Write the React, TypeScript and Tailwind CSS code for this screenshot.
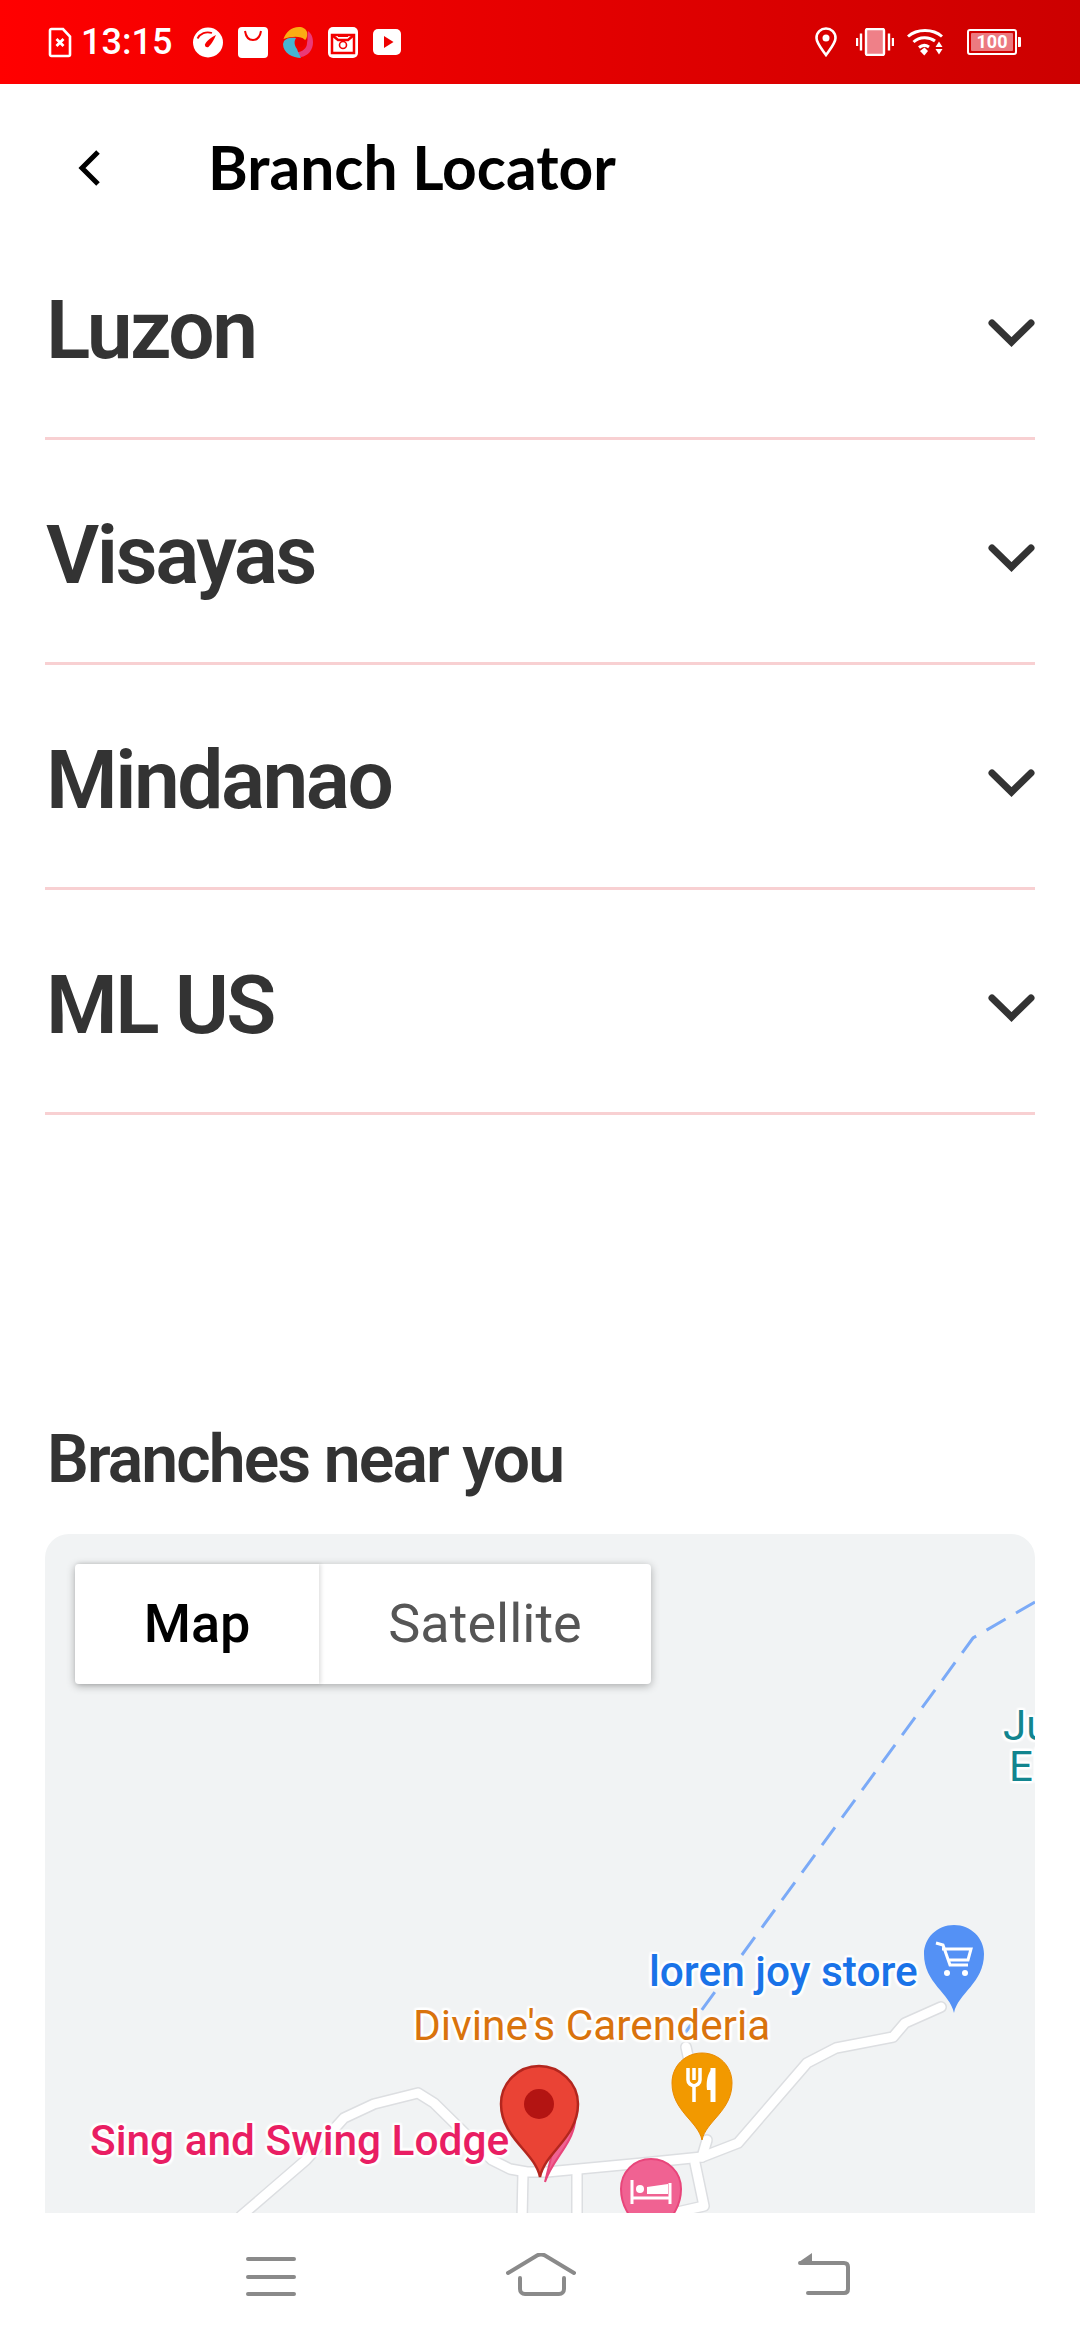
import React from 'react';

const regions = ['Luzon', 'Visayas', 'Mindanao', 'ML US'];

const FileIcon = () => (
  <svg width="24" height="31" viewBox="0 0 24 31" fill="none">
    <path d="M2 3.5C2 2.7 2.7 2 3.500 2H15L22 9.500V27.500C22 28.300 21.300 29 20.500 29H3.500C2.700 29 2 28.300 2 27.500Z" stroke="white" strokeWidth="2.600" />
    <path d="M8.500 12L15.500 19M15.500 12L8.500 19" stroke="white" strokeWidth="2.800" />
  </svg>
);

const GaugeIcon = () => (
  <svg width="30" height="31" viewBox="0 0 30 31">
    <circle cx="15" cy="15.500" r="15" fill="white" />
    <path d="M4.500 11.500C7 6.500 13 4 19 6" fill="none" stroke="#f70000" strokeWidth="1.800" />
    <path d="M12 17.500C13 14.500 18 10.500 23 8C21 13 17.500 18 15.500 20C13.500 21 11.500 19.500 12 17.500Z" fill="#f70000" />
  </svg>
);

const BagIcon = () => (
  <svg width="30" height="31" viewBox="0 0 30 31">
    <rect width="30" height="31" rx="4" fill="white" />
    <path d="M7 4C8 10.500 11 13 15 13C19 13 22 10.500 23 4" fill="none" stroke="#f50000" strokeWidth="2" />
  </svg>
);

const FlowerIcon = () => (
  <svg width="30" height="31" viewBox="0 0 30 31">
    <path d="M0.500 12C3 5 8 0 16 0C20 0 23 2 24 5C24.500 8 24 12 22 13C18 9 10 9 0.500 12Z" fill="#fbac13" />
    <path d="M25 4C29 7 30 11 30 15.500C30 23 25 29 18 30C16 29 12 27 12 25C18 26 24 22 24 16C25 12 24 8 25 4Z" fill="#ea3a77" />
    <path d="M1 14C3 11 8 10 13 11C11 14 11 18 14 22C15 25 17 29 18 31C10 31 0 26 0 17Z" fill="#47b4d2" />
    <circle cx="17.500" cy="15.500" r="4.500" fill="#e80000" />
  </svg>
);

const MailIcon = () => (
  <svg width="30" height="31" viewBox="0 0 30 31">
    <rect width="30" height="31" rx="5" fill="white" />
    <path d="M4 8H26V26H4Z" fill="none" stroke="#f20000" strokeWidth="2.500" />
    <path d="M4 8L10 13H20L26 8" fill="none" stroke="#f20000" strokeWidth="2.500" />
    <path d="M10 9H20" stroke="#f20000" strokeWidth="2" />
    <circle cx="15" cy="18" r="3.500" fill="none" stroke="#f20000" strokeWidth="1.600" />
  </svg>
);

const PlayIcon = () => (
  <svg width="28" height="26" viewBox="0 0 28 26">
    <rect width="28" height="26" rx="5" fill="white" />
    <path d="M11 7L20.500 13L11 19Z" fill="#ee0000" />
  </svg>
);

const PinIcon = () => (
  <svg width="22" height="30" viewBox="0 0 22 30" fill="none">
    <path d="M11 28C6 21 1.500 16 1.500 11C1.500 5.500 5.800 1.500 11 1.500C16.200 1.500 20.500 5.500 20.500 11C20.500 16 16 21 11 28Z" stroke="white" strokeWidth="2.600" />
    <circle cx="11" cy="11" r="3.500" fill="white" />
  </svg>
);

const VibrateIcon = () => (
  <svg width="38" height="28" viewBox="0 0 38 28">
    <rect x="10" y="1" width="18" height="26" rx="1.500" fill="#ef8088" stroke="white" strokeWidth="2.400" />
    <path d="M5 5.500V22.500M33 5.500V22.500M1 10V18M37 10V18" stroke="white" strokeWidth="2.400" />
  </svg>
);

const WifiIcon = () => (
  <svg width="36" height="28" viewBox="0 0 36 28" fill="none">
    <path d="M1 8.500C10 0.500 26 0.500 35 8.500" stroke="white" strokeWidth="3" />
    <path d="M6.500 14C12.500 8.500 22 8.500 28 13" stroke="white" strokeWidth="3" />
    <path d="M12 19.500C15 17 19 17 22 19" stroke="white" strokeWidth="3" />
    <path d="M13 23L17.500 19.500L21 23L17.300 27.500Z" fill="white" />
    <path d="M32 13.500L35.500 19H28.500ZM28.500 21H35.500L32 26.500Z" fill="white" />
  </svg>
);

const BatteryIcon = () => (
  <div className="flex items-center">
    <div className="w-[50px] h-[26px] rounded-[3px] border-2 border-white p-[2px]">
      <div className="h-full rounded-[1px] bg-[#ec7a80] flex items-center justify-center font-['Roboto',sans-serif] font-bold text-[18px] leading-none text-white">100</div>
    </div>
    <div className="w-[3px] h-[10px] ml-[1px] bg-white rounded-r-[1px]" />
  </div>
);

const Chevron = () => (
  <svg width="47" height="28" viewBox="0 0 47 28" fill="none">
    <path d="M4 4L23.500 23L43 4" stroke="#333333" strokeWidth="7" strokeLinecap="round" strokeLinejoin="miter" />
  </svg>
);

const road = [
  'M941 2007L905 2023L893 2037L836 2048L807 2063L738 2143L702 2157L643 2163L547 2172L527 2172L510 2169L492 2160L434 2103L418 2093L374 2104L344 2118L306 2160L241 2216',
  'M707 2140L702 2157M686 2047L690 2065',
  'M695 2163L704 2206L660 2216',
  'M577 2172V2220M523 2172L522 2220',
];

const MapDrawing = () => (
  <svg className="absolute inset-0" width="990" height="679" viewBox="45 1534 990 679" fill="none">
    {road.map((d, i) => (
      <path key={`casing-${i}`} d={d} stroke="#dcdee1" strokeWidth="12" strokeLinejoin="round" strokeLinecap="round" />
    ))}
    {road.map((d, i) => (
      <path key={`fill-${i}`} d={d} stroke="#ffffff" strokeWidth="9" strokeLinejoin="round" strokeLinecap="round" />
    ))}
    <path d="M1035 1602L973 1638L685 2033" stroke="#7baaf7" strokeWidth="3" strokeDasharray="22 12" />

    {/* pink pin behind the marker */}
    <path d="M545 2182C552 2160 572 2145 575 2122H560Z" fill="#f06292" stroke="#e8457a" strokeWidth="2" />

    {/* blue shop pin */}
    <path d="M954 2013C950 1993 924 1983 924 1954C924 1938 937 1925 954 1925C971 1925 984 1938 984 1954C984 1983 958 1993 954 2013Z" fill="#5491f5" />
    <path d="M936 1943L943 1945L950 1965H968M942 1949H971L968 1960H948" stroke="white" strokeWidth="3" />
    <circle cx="947" cy="1973" r="3" fill="white" />
    <circle cx="965" cy="1973" r="3" fill="white" />

    {/* orange food pin */}
    <path d="M702 2140C698 2121 672 2111 672 2083C672 2066 685 2053 702 2053C719 2053 732 2066 732 2083C732 2111 706 2121 702 2140Z" fill="#f29900" stroke="#ea8a00" strokeWidth="1" />
    <path d="M688 2068V2080C688 2084 691 2085 694 2086V2102M694 2068V2080M700 2068V2080C700 2084 697 2085 694 2086" stroke="white" strokeWidth="3.500" />
    <path d="M713 2068V2102" stroke="white" strokeWidth="5" />
    <path d="M713 2068C707 2073 706 2083 707 2090H713Z" fill="white" />

    {/* pink hotel pin */}
    <path d="M651 2249C647 2229 621 2218 621 2189C621 2172 634 2159 651 2159C668 2159 681 2172 681 2189C681 2218 655 2229 651 2249Z" fill="#f06292" stroke="#e8457a" strokeWidth="2" />
    <path d="M632 2180V2204M670 2183V2204M632 2198H670" stroke="white" strokeWidth="3" />
    <path d="M647 2187L668 2184V2194H647Z" fill="white" />
    <circle cx="640" cy="2189" r="4" fill="white" />

    {/* red marker */}
    <path d="M540 2177C535 2152 501 2138 501 2104C501 2083 518 2066 539 2066C560 2066 578 2083 578 2104C578 2138 545 2152 540 2177Z" fill="#ea4335" stroke="#b3261e" strokeWidth="2.500" />
    <circle cx="539" cy="2104" r="15" fill="#b31412" />
  </svg>
);

const halo = "[text-shadow:2px_0_2px_#fff,-2px_0_2px_#fff,0_2px_2px_#fff,0_-2px_2px_#fff,2px_2px_2px_#fff,-2px_-2px_2px_#fff,2px_-2px_2px_#fff,-2px_2px_2px_#fff]";

const App: React.FC = () => {
  return (
    <div className="w-[1080px] h-[2340px] bg-white flex flex-col overflow-hidden font-['Roboto',sans-serif]">
      {/* status bar */}
      <div className="h-[84px] shrink-0 flex items-center justify-between pl-[48px] pr-[59px] bg-linear-to-r from-[#ff0000] to-[#cc0000]">
        <div className="flex items-center">
          <FileIcon />
          <span className="ml-[9px] text-[36px] leading-none font-medium text-white">13:15</span>
          <div className="ml-[21px] flex items-center gap-[15px]">
            <GaugeIcon />
            <BagIcon />
            <FlowerIcon />
            <MailIcon />
            <PlayIcon />
          </div>
        </div>
        <div className="flex items-center">
          <PinIcon />
          <div className="ml-[19px]"><VibrateIcon /></div>
          <div className="ml-[13px]"><WifiIcon /></div>
          <div className="ml-[24px]"><BatteryIcon /></div>
        </div>
      </div>

      {/* header */}
      <div className="h-[131px] shrink-0 flex items-start pt-[48px] pl-[78px]">
        <svg width="22" height="36" viewBox="0 0 22 36" fill="none" className="mt-[18px]">
          <path d="M20 2L4 18L20 34" stroke="black" strokeWidth="5" />
        </svg>
        <h1 className="ml-[108px] text-[60.5px] leading-[70px] font-bold text-black font-['Lato',sans-serif]">Branch Locator</h1>
      </div>

      {/* regions */}
      <div className="mx-[45px]">
        {regions.map(name => (
          <div key={name} className="h-[225px] pt-[12px] border-b-[3px] border-[#f8d0d2] flex items-center justify-between">
            <span className="text-[82px] leading-none font-semibold text-[#333333] tracking-[-2.5px] ml-[1px] mb-[4px]">{name}</span>
            <div className="mt-[2px]"><Chevron /></div>
          </div>
        ))}
      </div>

      {/* nearby branches */}
      <h2 className="mt-[310px] ml-[47px] text-[66px] leading-[70px] font-semibold text-[#333333] tracking-[-1.9px]">Branches near you</h2>
      <div className="relative mx-[45px] mt-[39px] flex-1 rounded-t-[24px] overflow-hidden bg-[#f1f3f4]">
        <MapDrawing />

        <div className="absolute left-[30px] top-[30px] h-[120px] flex rounded-[4px] bg-white shadow-[0_2px_8px_rgba(0,0,0,0.3)] text-[54px]">
          <div className="w-[244px] pb-[2px] flex items-center justify-center font-medium text-black shadow-[2px_0_4px_rgba(0,0,0,0.12)]">Map</div>
          <div className="w-[332px] pb-[2px] flex items-center justify-center text-[#565656]">Satellite</div>
        </div>

        <span className={`absolute left-[958px] top-[171px] text-[42px] leading-[41px] text-[#12858f] text-center ${halo}`}>Ju<br />El</span>
        <span className={`absolute left-[604px] top-[417px] text-[42.4px] leading-none font-medium whitespace-nowrap text-[#1a73e8] ${halo}`}>loren joy store</span>
        <span className={`absolute left-[368px] top-[471px] text-[42.4px] leading-none whitespace-nowrap text-[#d9730d] ${halo}`}>Divine's Carenderia</span>
        <span className={`absolute left-[45px] top-[586px] text-[42.4px] leading-none font-medium whitespace-nowrap text-[#e91e63] ${halo}`}>Sing and Swing Lodge</span>
      </div>

      {/* navigation bar */}
      <div className="relative h-[127px] shrink-0 bg-white flex items-start pt-[40px] pl-[246px]">
        <svg width="50" height="42" viewBox="0 0 50 42" fill="none" className="mt-[3px]">
          <path d="M2 3H48M2 21H48M2 38H48" stroke="#8a8a8a" strokeWidth="4" strokeLinecap="round" />
        </svg>
        <svg width="70" height="44" viewBox="0 0 70 44" fill="none" className="ml-[210px]">
          <path d="M2 20L31 2.500C33.500 1.200 36.500 1.200 39 2.500L68 20" stroke="#8a8a8a" strokeWidth="4" strokeLinecap="round" />
          <path d="M14 25V36C14 39 16 41 19 41H53C56 41 58 39 58 36V25" stroke="#8a8a8a" strokeWidth="4" strokeLinecap="round" />
        </svg>
        <svg width="52" height="42" viewBox="0 0 52 42" fill="none" className="ml-[222px]">
          <path d="M2 10H46C48.500 10 50 11.500 50 14V36C50 38.500 48.500 40 46 40H10" stroke="#8a8a8a" strokeWidth="4" strokeLinecap="round" />
          <path d="M1 9L14 0V11Z" fill="#8a8a8a" />
        </svg>
      </div>
    </div>
  );
};

export default App;
